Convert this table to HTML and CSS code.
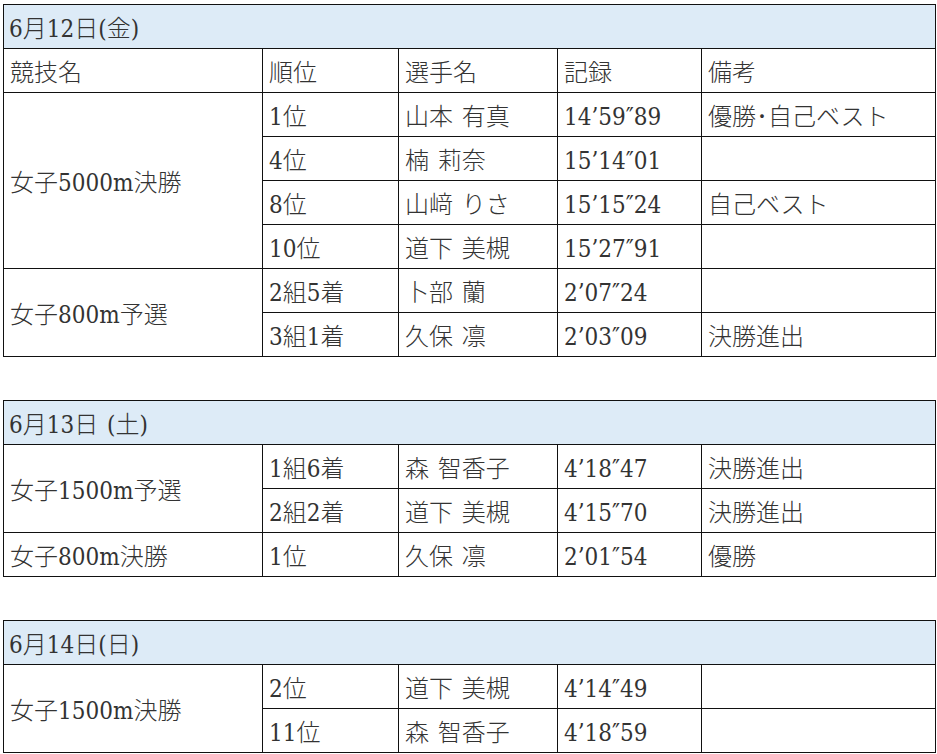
FILE: index.html
```html
<!DOCTYPE html>
<html lang="ja">
<head>
<meta charset="utf-8">
<title>記録</title>
<link rel="stylesheet" href="styles.css">
</head>
<body>
<div class="page">
<table class="results">
  <colgroup><col class="c1"><col class="c2"><col class="c3"><col class="c4"><col class="c5"></colgroup>
  <tr class="date"><td colspan="5">6月12日(金)</td></tr>
  <tr><td>競技名</td><td>順位</td><td>選手名</td><td>記録</td><td>備考</td></tr>
  <tr><td rowspan="4" class="event">女子5000m決勝</td><td>1位</td><td>山本 有真</td><td>14’59″89</td><td>優勝･自己ベスト</td></tr>
  <tr><td>4位</td><td>楠 莉奈</td><td>15’14″01</td><td></td></tr>
  <tr><td>8位</td><td>山﨑 りさ</td><td>15’15″24</td><td>自己ベスト</td></tr>
  <tr><td>10位</td><td>道下 美槻</td><td>15’27″91</td><td></td></tr>
  <tr><td rowspan="2" class="event">女子800m予選</td><td>2組5着</td><td>卜部 蘭</td><td>2’07″24</td><td></td></tr>
  <tr><td>3組1着</td><td>久保 凛</td><td>2’03″09</td><td>決勝進出</td></tr>
</table>

<table class="results">
  <colgroup><col class="c1"><col class="c2"><col class="c3"><col class="c4"><col class="c5"></colgroup>
  <tr class="date"><td colspan="5">6月13日 (土)</td></tr>
  <tr><td rowspan="2" class="event">女子1500m予選</td><td>1組6着</td><td>森 智香子</td><td>4’18″47</td><td>決勝進出</td></tr>
  <tr><td>2組2着</td><td>道下 美槻</td><td>4’15″70</td><td>決勝進出</td></tr>
  <tr><td class="event">女子800m決勝</td><td>1位</td><td>久保 凛</td><td>2’01″54</td><td>優勝</td></tr>
</table>

<table class="results">
  <colgroup><col class="c1"><col class="c2"><col class="c3"><col class="c4"><col class="c5"></colgroup>
  <tr class="date"><td colspan="5">6月14日(日)</td></tr>
  <tr><td rowspan="2" class="event">女子1500m決勝</td><td>2位</td><td>道下 美槻</td><td>4’14″49</td><td></td></tr>
  <tr><td>11位</td><td>森 智香子</td><td>4’18″59</td><td></td></tr>
</table>
</div>
</body>
</html>
```

FILE: styles.css
```css
html, body {
  margin: 0;
  padding: 0;
  background: #ffffff;
}

.page {
  padding: 4px 0 0 3px;
  display: flex;
  flex-direction: column;
  gap: 43px;
  align-items: flex-start;
}

.results {
  border-collapse: collapse;
  table-layout: fixed;
  width: 932px;
  font-family: "DejaVu Serif Condensed", "DejaVu Serif", "Noto Sans CJK JP", serif;
  font-stretch: condensed;
  font-size: 24px;
  font-weight: 300;
  color: #333333;
  word-spacing: 2px;
}

.c1 { width: 259px; }
.c2 { width: 136px; }
.c3 { width: 159px; }
.c4 { width: 144px; }
.c5 { width: 234px; }

.results td {
  border: 1px solid #111111;
  height: 44px;
  padding: 6px 6px 0 6px;
  box-sizing: border-box;
  vertical-align: middle;
  white-space: nowrap;
  overflow: hidden;
  line-height: 1.2;
}

.results .date td {
  background: #ddebf7;
  padding-left: 5px;
}
```
